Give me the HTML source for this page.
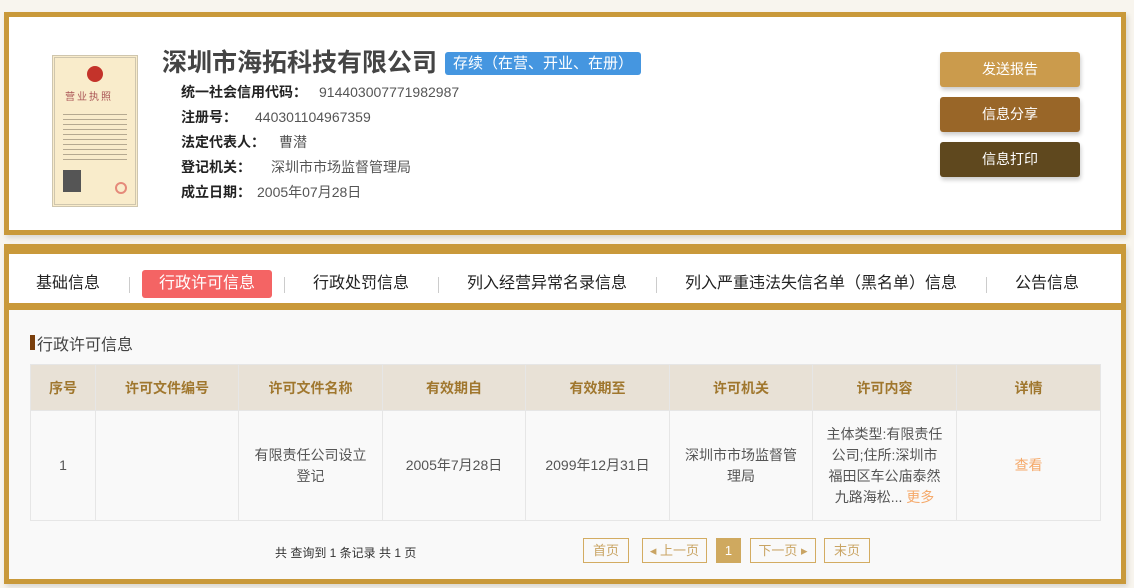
<!DOCTYPE html>
<html><head><meta charset="utf-8"><style>
*{margin:0;padding:0;box-sizing:border-box}
body{width:1134px;height:588px;background:#f8f5ee;font-family:"Liberation Sans","Noto Sans CJK SC",sans-serif;position:relative;overflow:hidden}
.box1{position:absolute;left:4px;top:12px;width:1122px;height:223px;border:5px solid #c9993a;background:#fff;box-shadow:2px 3px 5px rgba(0,0,0,.12)}
.box2{position:absolute;left:4px;top:244px;width:1122px;height:340px;border:5px solid #c9993a;border-top-width:10px;background:#f9f9f9;box-shadow:2px 3px 5px rgba(0,0,0,.12)}
.abs{position:absolute;white-space:nowrap}
.lic{position:absolute;left:43px;top:38px;width:86px;height:152px;background:#f9eccb;border:3px double #cfc6ae}
.title{left:153px;top:26px;font-size:25px;font-weight:bold;color:#444}
.tag{left:436px;top:35px;height:23px;padding:0 8px;background:#4596e0;color:#fff;font-size:15px;line-height:23px;border-radius:3px}
.lbl{font-size:14px;color:#222;font-weight:bold}
.val{font-size:14px;color:#555}
.btn{position:absolute;left:931px;width:140px;height:35px;color:#fff;font-size:14px;text-align:center;line-height:35px;border-radius:3px;box-shadow:1px 3px 4px rgba(0,0,0,.2)}
.tabs{position:absolute;left:0;top:0;width:1112px;height:56px;background:#fff;border-bottom:7px solid #c9993a}
.tab{position:absolute;top:16px;font-size:16px;color:#222;line-height:28px}
.sep{position:absolute;top:23px;width:1px;height:16px;background:#ccc}
table{position:absolute;left:21px;top:110px;border-collapse:collapse;font-size:14px;color:#555}
td,th{border:1px solid #e6e6e6;text-align:center}
th{background:#e8e1d6;color:#a0772e;height:46px;font-size:14px}
td{height:110px;line-height:21px}
.pg{position:absolute;top:284px;height:25px;border:1px solid #d3ac62;color:#c9a463;font-size:13px;line-height:23px;text-align:center}
</style></head><body>
<div class="box1">
 <div class="lic">
  <div style="position:absolute;left:32px;top:8px;width:16px;height:16px;border-radius:50%;background:#c4332a"></div>
  <div style="position:absolute;left:10px;top:30px;font-size:10px;color:#a55;letter-spacing:2px">营业执照</div>
  <div style="position:absolute;left:8px;top:52px;width:64px;height:50px;background:repeating-linear-gradient(#f9eccb 0 4px,#b5a990 4px 5px)"></div>
  <div style="position:absolute;left:8px;top:112px;width:18px;height:22px;background:#555"></div>
  <div style="position:absolute;left:60px;top:124px;width:12px;height:12px;border-radius:50%;border:2px solid #e58a7a"></div>
 </div>
 <div class="abs title">深圳市海拓科技有限公司</div>
 <div class="abs tag">存续（在营、开业、在册）</div>
 <div class="abs" style="left:172px;top:65px"><span class="lbl">统一社会信用代码：</span><span class="val" style="margin-left:12px">914403007771982987</span></div>
 <div class="abs" style="left:172px;top:90px"><span class="lbl">注册号：</span><span class="val" style="margin-left:18px">440301104967359</span></div>
 <div class="abs" style="left:172px;top:115px"><span class="lbl">法定代表人：</span><span class="val" style="margin-left:14px">曹潜</span></div>
 <div class="abs" style="left:172px;top:140px"><span class="lbl">登记机关：</span><span class="val" style="margin-left:20px">深圳市市场监督管理局</span></div>
 <div class="abs" style="left:172px;top:165px"><span class="lbl">成立日期：</span><span class="val" style="margin-left:6px">2005年07月28日</span></div>
 <div class="btn" style="top:35px;background:#cb9b4c">发送报告</div>
 <div class="btn" style="top:80px;background:#996628">信息分享</div>
 <div class="btn" style="top:125px;background:#5f481e">信息打印</div>
</div>
<div class="box2">
 <div class="tabs">
  <div class="tab" style="left:27px">基础信息</div>
  <div class="sep" style="left:120px"></div>
  <div class="tab" style="left:133px;width:130px;text-align:center;background:#f46464;color:#fff;border-radius:3px">行政许可信息</div>
  <div class="sep" style="left:275px"></div>
  <div class="tab" style="left:304px">行政处罚信息</div>
  <div class="sep" style="left:429px"></div>
  <div class="tab" style="left:458px">列入经营异常名录信息</div>
  <div class="sep" style="left:647px"></div>
  <div class="tab" style="left:676px">列入严重违法失信名单（黑名单）信息</div>
  <div class="sep" style="left:977px"></div>
  <div class="tab" style="left:1006px">公告信息</div>
 </div>
 <div style="position:absolute;left:21px;top:81px;width:5px;height:15px;background:#7a3f0c"></div>
 <div class="abs" style="left:28px;top:77px;font-size:16px;color:#444">行政许可信息</div>
 <table>
  <tr><th style="width:65px">序号</th><th style="width:143px">许可文件编号</th><th style="width:144px">许可文件名称</th><th style="width:143px">有效期自</th><th style="width:144px">有效期至</th><th style="width:143px">许可机关</th><th style="width:144px">许可内容</th><th style="width:144px">详情</th></tr>
  <tr><td>1</td><td></td><td>有限责任公司设立<br>登记</td><td>2005年7月28日</td><td>2099年12月31日</td><td>深圳市市场监督管<br>理局</td><td>主体类型:有限责任<br>公司;住所:深圳市<br>福田区车公庙泰然<br>九路海松... <span style="color:#f5a96a">更多</span></td><td style="color:#f5a96a">查看</td></tr>
 </table>
 <div class="abs" style="left:266px;top:290px;font-size:12px;color:#333">共 查询到 1 条记录 共 1 页</div>
 <div class="pg" style="left:574px;width:46px">首页</div>
 <div class="pg" style="left:633px;width:65px">◂ 上一页</div>
 <div class="pg" style="left:707px;width:25px;background:#cfa95f;border-color:#cfa95f;color:#fff">1</div>
 <div class="pg" style="left:741px;width:66px">下一页 ▸</div>
 <div class="pg" style="left:815px;width:46px">末页</div>
</div>
</body></html>
